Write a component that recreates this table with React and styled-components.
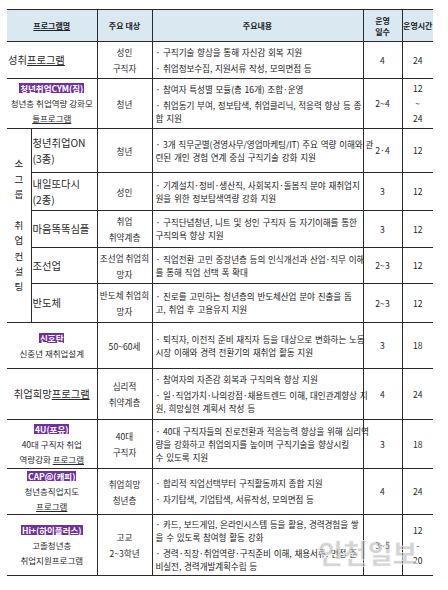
import React from 'react';
import styled, { createGlobalStyle } from 'styled-components';

const Global = createGlobalStyle`
  html, body { margin: 0; padding: 0; background: #fff; }
  body { font-family: "Noto Sans CJK KR", "Noto Sans", sans-serif; color: #222; }
`;

const Page = styled.div`
  position: relative;
  width: 448px;
  height: 590px;
  padding: 9px 15px 0 7px;
  box-sizing: border-box;
  overflow: hidden;
`;

const Table = styled.table`
  width: 426px;
  border-collapse: collapse;
  table-layout: fixed;
  font-size: 8.6px;
  line-height: 13px;
`;

const Row = styled.tr`
  height: ${p => p.$h}px;
`;

const Th = styled.th`
  background: #d9e8f1;
  border: 1px solid #2a2a2a;
  border-left: ${p => (p.$first ? 'none' : '1px solid #2a2a2a')};
  border-right: ${p => (p.$last ? 'none' : '1px solid #2a2a2a')};
  font-weight: 700;
  font-size: 8px;
  line-height: 11px;
  color: #222;
  padding: 0;
  text-align: center;
  vertical-align: middle;
`;

const Td = styled.td`
  border: 1px solid #2a2a2a;
  border-left: ${p => (p.$first ? 'none' : '1px solid #2a2a2a')};
  border-right: ${p => (p.$last ? 'none' : '1px solid #2a2a2a')};
  padding: 0;
  vertical-align: middle;
  text-align: center;
  white-space: nowrap;
`;

const NameCell = styled(Td)`
  text-align: ${p => p.$align || 'center'};
  padding-left: ${p => (p.$align === 'left' ? '1px' : '0')};
  font-size: ${p => (p.$big ? '10.3px' : '8.5px')};
  line-height: ${p => (p.$big ? '16px' : '15px')};
  color: #2a2a2a;
`;

const GroupCell = styled(Td)`
  font-size: 9.5px;
  line-height: 15.4px;
  color: #222;
`;

const TargetCell = styled(Td)`
  line-height: 16px;
  color: #2a2a2a;
`;

const ContentCell = styled(Td)`
  text-align: left;
  padding-left: 3px;
  color: #222;
  letter-spacing: -0.1px;
  word-spacing: 1px;
`;

const NumCell = styled(Td)`
  line-height: 15px;
  color: #2a2a2a;
`;

const Bullet = styled.div`
  & + & { margin-top: 3px; }
`;

const Label = styled.span`
  display: inline-block;
  background: #7030a0;
  color: #fff;
  font-weight: 700;
  font-size: 8.5px;
  line-height: 10px;
  padding: 0 1px;
`;

const Ul = styled.span`
  text-decoration: underline;
  text-decoration-thickness: 1px;
  text-underline-offset: 1px;
`;

const Watermark = styled.div`
  position: absolute;
  left: 318px;
  top: 533px;
  font-size: 27px;
  font-weight: 900;
  color: rgba(175, 175, 175, 0.55);
  -webkit-text-stroke: 1px rgba(255, 255, 255, 0.7);
  pointer-events: none;
  white-space: nowrap;
`;

const Lines = ({ items }) => items.map((t, i) => (
  <React.Fragment key={i}>{i > 0 && <br />}{t}</React.Fragment>
));

const Content = ({ bullets }) => bullets.map((b, i) => (
  <Bullet key={i}>
    {b.map((t, j) => (
      <React.Fragment key={j}>{j > 0 && <br />}{j === 0 ? '· ' : ''}{t}</React.Fragment>
    ))}
  </Bullet>
));

const groupChars = ['소', '그', '룹', '', '취', '업', '컨', '설', '팅'];

const rows = [
  {
    h: 37,
    name: <>성취<Ul>프로그램</Ul></>, align: 'left', big: true,
    target: ['성인', '구직자'],
    content: [['구직기술 향상을 통해 자신감 회복 지원'], ['취업정보수집, 지원서류 작성, 모의면접 등']],
    days: ['4'], hours: ['24'],
  },
  {
    h: 50,
    name: <><Label>청년취업CYM(짐)</Label><br />청년층 취업역량 강화모<br /><Ul>듈프로그램</Ul></>,
    target: ['청년'],
    content: [['참여자 특성별 모듈(총 16개) 조합·운영'], ['취업동기 부여, 정보탐색, 취업클리닉, 적응력 향상 등 종', '합 지원']],
    days: ['2~4'], hours: ['12', '~', '24'],
  },
  {
    h: 44, group: true,
    name: <>청년취업ON<br />(3종)</>, align: 'left', big: true,
    target: ['청년'],
    content: [['3개 직무군별(경영사무/영업마케팅/IT) 주요 역량 이해와 관', '련된 개인 경험 연계 중심 구직기술 강화 지원']],
    days: ['2·4'], hours: ['12'],
  },
  {
    h: 38, inGroup: true,
    name: <>내일또다시<br />(2종)</>, align: 'left', big: true,
    target: ['성인'],
    content: [['기계설치·정비·생산직, 사회복지·돌봄직 분야 재취업지', '원을 위한 정보탐색역량 강화 지원']],
    days: ['3'], hours: ['12'],
  },
  {
    h: 37, inGroup: true,
    name: <>마음똑똑심플</>, align: 'left', big: true,
    target: ['취업', '취약계층'],
    content: [['구직단념청년, 니트 및 성인 구직자 등 자기이해를 통한', '구직의욕 향상 지원']],
    days: ['3'], hours: ['12'],
  },
  {
    h: 36, inGroup: true,
    name: <>조선업</>, align: 'left', big: true,
    target: ['조선업 취업희', '망자'],
    content: [['직업전환 고민 중장년층 등의 인식개선과 산업·직무 이해', '를 통해 직업 선택 폭 확대']],
    days: ['2~3'], hours: ['12'],
  },
  {
    h: 39, inGroup: true,
    name: <>반도체</>, align: 'left', big: true,
    target: ['반도체 취업희', '망자'],
    content: [['진로를 고민하는 청년층의 반도체산업 분야 진출을 돕', '고, 취업 후 고용유지 지원']],
    days: ['2~3'], hours: ['12'],
  },
  {
    h: 46,
    name: <><Label>신호탄</Label><br />신중년 재취업설계</>,
    target: ['50~60세'],
    content: [['퇴직자, 이전직 준비 재직자 등을 대상으로 변화하는 노동', '시장 이해와 경력 전환기의 재취업 활동 지원']],
    days: ['3'], hours: ['18'],
  },
  {
    h: 51,
    name: <>취업희망<Ul>프로그램</Ul></>, big: true,
    target: ['심리적', '취약계층'],
    content: [['참여자의 자존감 회복과 구직의욕 향상 지원'], ['일·직업가치·나의강점·채용트렌드 이해, 대인관계향상 지', '원, 희망실현 계획서 작성 등']],
    days: ['4'], hours: ['24'],
  },
  {
    h: 49,
    name: <><Label>4U(포유)</Label><br />40대 구직자 취업<br />역량강화 <Ul>프로그램</Ul></>,
    target: ['40대', '구직자'],
    content: [['40대 구직자들의 진로전환과 적응능력 향상을 위해 심리역', '량을 강화하고 취업의지를 높이며 구직기술을 향상시킬', '수 있도록 지원']],
    days: ['3'], hours: ['18'],
  },
  {
    h: 44,
    name: <><Label>CAP@(캐피)</Label><br />청년층직업지도<br /><Ul>프로그램</Ul></>,
    target: ['취업희망', '청년층'],
    content: [['합리적 직업선택부터 구직활동까지 종합 지원'], ['자기탐색, 기업탐색, 서류작성, 모의면접 등']],
    days: ['4'], hours: ['24'],
  },
  {
    h: 61,
    name: <><Label>Hi+(하이플러스)</Label><br />고졸청년층<br />취업지원프로그램</>,
    target: ['고교', '2~3학년'],
    content: [['카드, 보드게임, 온라인시스템 등을 활용, 경력경험을 쌓', '을 수 있도록 참여형 활동 강화'], ['경력·직장·취업역량·구직준비 이해, 채용서류, 면접 준', '비실전, 경력개발계획수립 등']],
    days: ['3~5'], hours: ['12', '-', '20'],
  },
];

export default function App() {
  return (
    <Page>
      <Global />
      <Table>
        <colgroup>
          <col style={{ width: 24 }} />
          <col style={{ width: 66 }} />
          <col style={{ width: 55 }} />
          <col style={{ width: 211 }} />
          <col style={{ width: 39 }} />
          <col style={{ width: 31 }} />
        </colgroup>
        <thead>
          <Row $h={32}>
            <Th $first colSpan={2}><Ul>프로그램명</Ul></Th>
            <Th>주요 대상</Th>
            <Th>주요내용</Th>
            <Th>운영<br />일수</Th>
            <Th $last>운영시간</Th>
          </Row>
        </thead>
        <tbody>
          {rows.map((r, i) => (
            <Row key={i} $h={r.h}>
              {r.group && (
                <GroupCell $first rowSpan={5}>
                  {groupChars.map((c, k) => (
                    <React.Fragment key={k}>{k > 0 && <br />}{c}</React.Fragment>
                  ))}
                </GroupCell>
              )}
              <NameCell
                $first={!r.group && !r.inGroup}
                colSpan={r.group || r.inGroup ? 1 : 2}
                $align={r.align}
                $big={r.big}
              >
                {r.name}
              </NameCell>
              <TargetCell><Lines items={r.target} /></TargetCell>
              <ContentCell><Content bullets={r.content} /></ContentCell>
              <NumCell><Lines items={r.days} /></NumCell>
              <NumCell $last><Lines items={r.hours} /></NumCell>
            </Row>
          ))}
        </tbody>
      </Table>
      <Watermark>인천일보</Watermark>
    </Page>
  );
}
